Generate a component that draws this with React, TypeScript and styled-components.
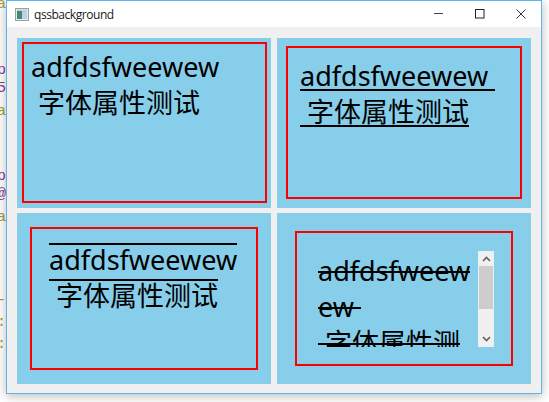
import React from "react";
import styled, { createGlobalStyle } from "styled-components";

const GlobalStyle = createGlobalStyle`
  html, body {
    margin: 0;
    padding: 0;
    background: #ffffff;
    overflow: hidden;
  }
  * { box-sizing: border-box; }
`;

const Desktop = styled.div`
  position: relative;
  width: 549px;
  height: 402px;
  padding: 0 7px 8px 6px;
  background: #ffffff;
  overflow: hidden;
`;

// bits of the editor behind the window
const CodeBit = styled.span<{ $top: number; $color: string }>`
  position: absolute;
  left: -3px;
  top: ${(p) => p.$top}px;
  color: ${(p) => p.$color};
  font: 15px/18px "Liberation Mono", monospace;
`;

const Window = styled.div`
  position: relative;
  display: flex;
  flex-direction: column;
  height: 100%;
  border: 1px solid #5fb4ea;
  background: #f0f0f0;
  box-shadow: 0 2px 10px rgba(0, 0, 0, 0.28);
`;

const TitleBar = styled.div`
  display: flex;
  align-items: center;
  height: 26px;
  padding-left: 8px;
  background: #ffffff;
  flex: none;
`;

const Title = styled.span`
  margin-left: 5px;
  color: #1a1a1a;
  font: 12px "Open Sans", "Noto Sans", sans-serif;
  letter-spacing: -0.45px;
`;

const Controls = styled.div`
  display: flex;
  align-items: center;
  margin-left: auto;
  margin-right: 15px;
  gap: 31px;
`;

const Content = styled.div`
  display: grid;
  flex: 1;
  grid-template-columns: 254px 254px;
  grid-template-rows: 170px 171px;
  column-gap: 6px;
  row-gap: 5px;
  padding: 11px 0 0 10px;
`;

const Panel = styled.div<{ $pad: string }>`
  display: flex;
  padding: ${(p) => p.$pad};
  background: #87ceeb;
`;

const RedBox = styled.div<{ $pad: string }>`
  display: flex;
  flex: 1;
  min-width: 0;
  padding: ${(p) => p.$pad};
  border: 2px solid #ff0000;
`;

const Label = styled.div`
  color: #000000;
  font: 27px/36px "Noto Sans", "Noto Sans CJK SC", sans-serif;
  white-space: pre-wrap;
`;

// the line is a background so that each wrapped line box gets its own, at the
// height the reference has it rather than where the font metrics put it
const Ruled = styled.span<{ $y: number }>`
  background: linear-gradient(#000000, #000000) 0 ${(p) => p.$y}px / 100% 2px no-repeat;
  -webkit-box-decoration-break: clone;
  box-decoration-break: clone;
`;

const TextEdit = styled.div`
  display: flex;
  flex: 1;
  min-width: 0;
  height: 96px;
`;

const EditText = styled(Label)`
  flex: 1;
  min-width: 0;
  padding-top: 2px;
  overflow: hidden;
  word-break: break-all;
`;

const ScrollBar = styled.div`
  display: flex;
  flex-direction: column;
  align-items: center;
  flex: none;
  width: 16px;
  background: #f0f0f0;
  border: 1px solid #e6f1f7;
`;

const ScrollButton = styled.div`
  display: flex;
  align-items: center;
  justify-content: center;
  flex: none;
  height: 14px;
`;

const Thumb = styled.div`
  flex: none;
  width: 100%;
  height: 43px;
  background: #cdcdcd;
`;

const Spacer = styled.div`
  flex: 1;
`;

const AppIcon = () => (
  <svg width="14" height="13" viewBox="0 0 14 13">
    <rect x="0.5" y="0.5" width="13" height="12" fill="#e8eaec" stroke="#9aa0a6" />
    <rect x="2" y="3" width="5" height="8" fill="#3f8a7c" />
    <rect x="7" y="3" width="5" height="8" fill="#b9d3e6" />
    <rect x="2" y="1.5" width="10" height="1.5" fill="#c9ccd0" />
  </svg>
);

const MinIcon = () => (
  <svg width="10" height="10" viewBox="0 0 10 10">
    <rect x="0" y="4" width="9" height="1" fill="#444" />
  </svg>
);

const MaxIcon = () => (
  <svg width="10" height="10" viewBox="0 0 10 10">
    <rect x="0.5" y="0.5" width="8.5" height="8.5" fill="none" stroke="#222" />
  </svg>
);

const CloseIcon = () => (
  <svg width="10" height="10" viewBox="0 0 10 10">
    <path d="M0.5 0.5 L9.5 9.5 M9.5 0.5 L0.5 9.5" stroke="#333" fill="none" />
  </svg>
);

const Chevron = ({ up }: { up?: boolean }) => (
  <svg width="9" height="6" viewBox="0 0 9 6">
    <path
      d={up ? "M1 5 L4.5 1.5 L8 5" : "M1 1 L4.5 4.5 L8 1"}
      stroke="#606060"
      strokeWidth="1.6"
      fill="none"
    />
  </svg>
);

const codeBits = [
  { top: -4, color: "#a89a3c", text: "a" },
  { top: 62, color: "#8a3a94", text: "p" },
  { top: 80, color: "#8a3a94", text: "5" },
  { top: 103, color: "#a89a3c", text: "a" },
  { top: 168, color: "#8a3a94", text: "p" },
  { top: 186, color: "#8a3a94", text: "@" },
  { top: 209, color: "#a89a3c", text: "a" },
  { top: 292, color: "#a89a3c", text: "-" },
  { top: 314, color: "#a89a3c", text: ":" },
  { top: 336, color: "#a89a3c", text: ":" },
];

const App: React.FC = () => {
  return (
    <Desktop>
      <GlobalStyle />
      {codeBits.map((b) => (
        <CodeBit key={b.top} $top={b.top} $color={b.color}>
          {b.text}
        </CodeBit>
      ))}
      <Window>
        <TitleBar>
          <AppIcon />
          <Title>qssbackground</Title>
          <Controls>
            <MinIcon />
            <MaxIcon />
            <CloseIcon />
          </Controls>
        </TitleBar>
        <Content>
          <Panel $pad="4px 4px 5px 5px">
            <RedBox $pad="5px 0 0 7px">
              <Label>{"adfdsfweewew\n 字体属性测试"}</Label>
            </RedBox>
          </Panel>
          <Panel $pad="8px 9px 9px 9px">
            <RedBox $pad="10px 0 0 12px">
              <Label>
                <Ruled $y={32}>{"adfdsfweewew \n 字体属性测试"}</Ruled>
              </Label>
            </RedBox>
          </Panel>
          <Panel $pad="14px 13px 14px 13px">
            <RedBox $pad="13px 0 0 17px">
              <Label>
                <Ruled $y={2}>{"adfdsfweewew\n 字体属性测试"}</Ruled>
              </Label>
            </RedBox>
          </Panel>
          <Panel $pad="18px">
            <RedBox $pad="18px 17px 0 21px">
              <TextEdit>
                <EditText>
                  <Ruled $y={19}>{"adfdsfweewew \n 字体属性测试"}</Ruled>
                </EditText>
                <ScrollBar>
                  <ScrollButton>
                    <Chevron up />
                  </ScrollButton>
                  <Thumb />
                  <Spacer />
                  <ScrollButton>
                    <Chevron />
                  </ScrollButton>
                </ScrollBar>
              </TextEdit>
            </RedBox>
          </Panel>
        </Content>
      </Window>
    </Desktop>
  );
};

export default App;
